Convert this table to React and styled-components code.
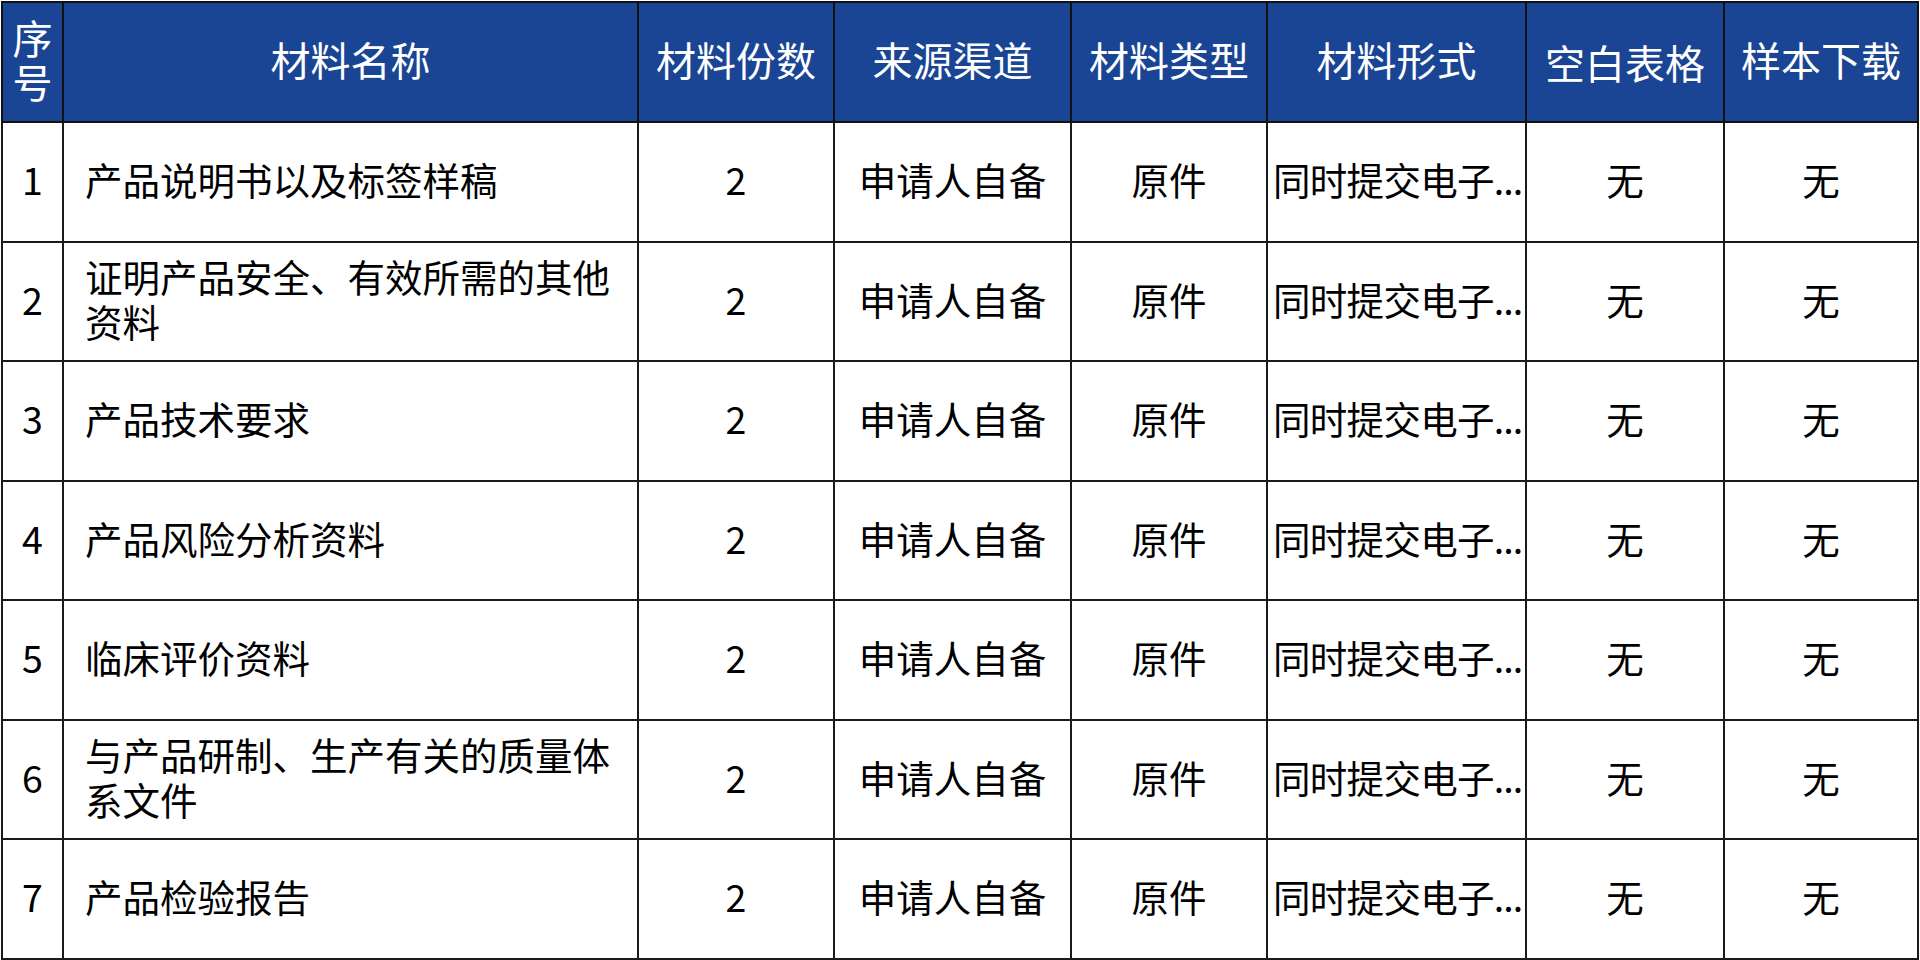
import React from "react";
import styled, { createGlobalStyle } from "styled-components";

const Global = createGlobalStyle`
  html, body { margin: 0; padding: 0; background: #ffffff; }
  body { font-family: "Noto Sans CJK SC", "Noto Sans", sans-serif; }
`;

const Page = styled.div`
  width: 1920px;
  height: 960px;
  overflow: hidden;
  padding: 1px 0 0 1px;
  box-sizing: border-box;
`;

const Table = styled.table`
  border-collapse: collapse;
  table-layout: fixed;
  width: 1916px;
`;

const HeadCell = styled.th`
  background: #1a4594;
  color: #ffffff;
  font-size: 40px;
  font-weight: 400;
  line-height: 44px;
  text-align: center;
  border: 2px solid #111;
  height: 120px;
  padding: ${(p) => (p.$low ? "0 0 0 0" : "0 0 7px 0")};
  box-sizing: border-box;
`;

const Cell = styled.td`
  font-size: 37.5px;
  line-height: 45px;
  color: #000;
  border: 2px solid #1a1a1a;
  height: 119.5px;
  box-sizing: border-box;
  text-align: ${(p) => p.$align || "center"};
  padding: ${(p) =>
    p.$align === "left" ? (p.$tight ? "0 0 6px 5px" : "0 18px 6px 21px") : "0 0 6px 0"};
  white-space: ${(p) => (p.$nowrap ? "nowrap" : "normal")};
  letter-spacing: ${(p) => (p.$tight ? "-0.7px" : "0")};
  overflow: hidden;
`;

const Dots = styled.span`
  letter-spacing: -1px;
`;

const columns = [
  { w: 61, label: "序号" },
  { w: 575, label: "材料名称" },
  { w: 196, label: "材料份数" },
  { w: 237, label: "来源渠道" },
  { w: 196, label: "材料类型" },
  { w: 259, label: "材料形式" },
  { w: 198, label: "空白表格", low: true },
  { w: 194, label: "样本下载" },
];

const rows = [
  "产品说明书以及标签样稿",
  "证明产品安全、有效所需的其他资料",
  "产品技术要求",
  "产品风险分析资料",
  "临床评价资料",
  "与产品研制、生产有关的质量体系文件",
  "产品检验报告",
];

export default function App() {
  return (
    <>
      <Global />
      <Page>
        <Table>
          <colgroup>
            {columns.map((c) => (
              <col key={c.label} style={{ width: c.w }} />
            ))}
          </colgroup>
          <thead>
            <tr>
              {columns.map((c) => (
                <HeadCell key={c.label} $low={c.low}>
                  {c.label}
                </HeadCell>
              ))}
            </tr>
          </thead>
          <tbody>
            {rows.map((name, i) => (
              <tr key={name}>
                <Cell>{i + 1}</Cell>
                <Cell $align="left">{name}</Cell>
                <Cell>2</Cell>
                <Cell>申请人自备</Cell>
                <Cell>原件</Cell>
                <Cell $align="left" $tight $nowrap>
                  同时提交电子<Dots>...</Dots>
                </Cell>
                <Cell>无</Cell>
                <Cell>无</Cell>
              </tr>
            ))}
          </tbody>
        </Table>
      </Page>
    </>
  );
}
